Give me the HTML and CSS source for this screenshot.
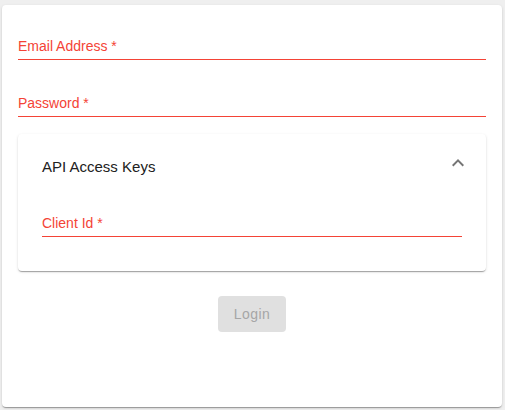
FILE: index.html
```html
<!DOCTYPE html>
<html lang="en">
<head>
<meta charset="utf-8">
<title>Login</title>
<link rel="stylesheet" href="styles.css">
</head>
<body>
<main class="card">
  <div class="field field-email"><span class="label">Email Address *</span></div>
  <div class="field field-password"><span class="label">Password *</span></div>
  <section class="panel">
    <div class="panel-head">
      <span class="panel-title">API Access Keys</span>
      <svg class="chevron" viewBox="0 0 24 24" width="24" height="24" aria-hidden="true"><path d="M12 8l-6 6 1.41 1.41L12 10.83l4.59 4.58L18 14z"/></svg>
    </div>
    <div class="field field-client"><span class="label">Client Id *</span></div>
  </section>
  <div class="actions"><button class="btn" disabled>Login</button></div>
</main>
</body>
</html>
```
FILE: styles.css
```css
html, body { margin: 0; }
body {
  background: #efefef;
  padding: 5px 3px 3px 2px;
  font-family: "Liberation Sans", Arial, Helvetica, sans-serif;
  box-sizing: border-box;
  height: 410px;
}
.card {
  background: #fff;
  border-radius: 4px;
  box-shadow: 0 2px 1px -1px rgba(0,0,0,0.2), 0 1px 1px 0 rgba(0,0,0,0.14), 0 1px 3px 0 rgba(0,0,0,0.12);
  height: 402px;
  padding: 0 16px;
  box-sizing: border-box;
  display: flex;
  flex-direction: column;
}
.field {
  border-bottom: 1px solid #f44336;
  padding-bottom: 5px;
}
.label {
  display: block;
  color: #f44336;
  font-size: 14px;
  line-height: 16px;
}
.field-email { margin-top: 33px; }
.field-password { margin-top: 35px; }
.panel {
  margin-top: 17px;
  background: #fff;
  border-radius: 4px;
  box-shadow: 0 2px 1px -1px rgba(0,0,0,0.2), 0 1px 1px 0 rgba(0,0,0,0.14), 0 1px 3px 0 rgba(0,0,0,0.12);
  padding: 0 24px;
  height: 137px;
  box-sizing: border-box;
  flex-shrink: 0;
}
.panel-head {
  display: flex;
  justify-content: space-between;
  align-items: flex-start;
  padding-top: 17px;
  margin-right: -8px;
}
.panel-title {
  margin-top: 6px;
  font-size: 15px;
  line-height: 20px;
  color: #212121;
}
.chevron { fill: #757575; display: block; }
.field-client { margin-top: 38px; }
.actions {
  display: flex;
  justify-content: center;
  margin-top: 25px;
}
.btn {
  font-family: inherit;
  font-size: 14px;
  letter-spacing: 0.4px;
  line-height: 36px;
  height: 36px;
  padding: 0 16px;
  border: none;
  border-radius: 4px;
  background: #e0e0e0;
  color: #a6a6a6;
}
```
